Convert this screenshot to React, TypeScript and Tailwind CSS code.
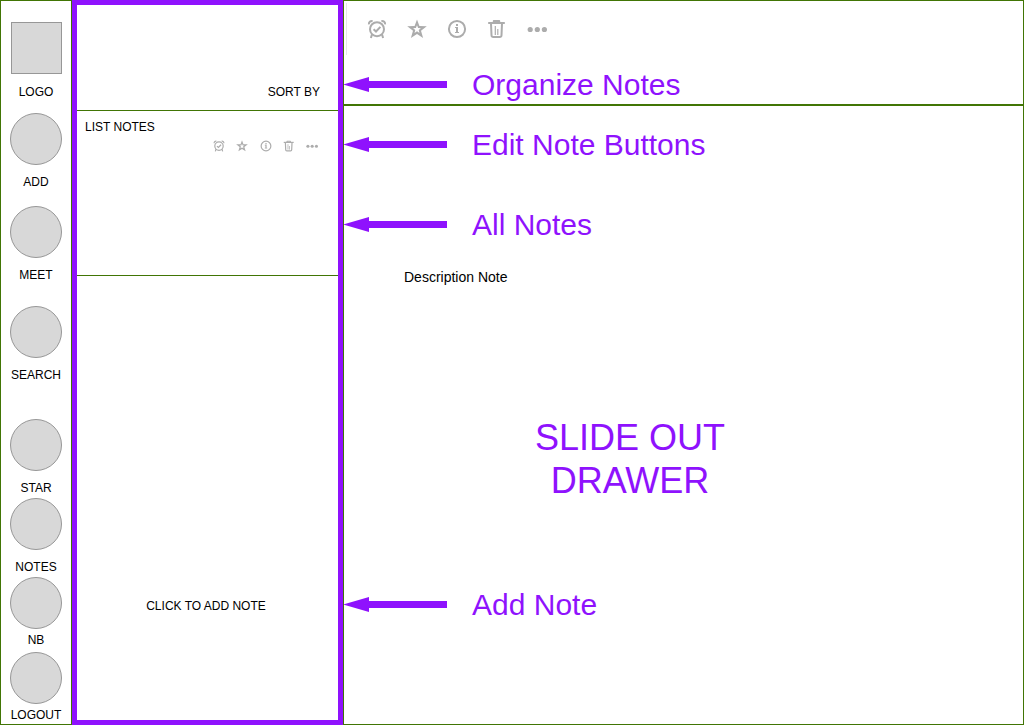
import React from "react";

type IconProps = { className?: string };

function AlarmIcon({ className }: IconProps) {
  return (
    <svg viewBox="0 0 20 20" className={className} fill="none" stroke="currentColor" strokeWidth="2" aria-hidden="true">
      <circle cx="10" cy="10.2" r="7" />
      <path d="M6.6 10.2l2.4 2.3 4.4-4.6" />
      <path d="M1.9 5.4C1.7 3 3.2 1.7 5.6 1.9M18.1 5.4c.2-2.4-1.300-3.7-3.700-3.500" />
      <path d="M5 15.400L3.900 19M15 15.400l1.100 3.600" />
    </svg>
  );
}

function StarIcon({ className }: IconProps) {
  return (
    <svg viewBox="0 0 20 20" className={className} fill="currentColor" fillRule="evenodd" aria-hidden="true">
      <path d="M10 .5l2.4 6.5 7.400.2-5.800 4.500 2.100 7.200L10 14.900l-6.100 4 2.100-7.200L.2 7.200 7.600 7 10 .5zM10 6.300L8.900 9.100l-2.800.2 2.200 1.700-.8 2.900L10 12.300l2.500 1.600-.8-2.900 2.200-1.700-2.800-.2L10 6.300z" />
    </svg>
  );
}

function InfoIcon({ className }: IconProps) {
  return (
    <svg viewBox="0 0 20 20" className={className} aria-hidden="true">
      <circle cx="10" cy="10" r="8.1" fill="none" stroke="currentColor" strokeWidth="2" />
      <path fill="currentColor" d="M9 5h2v2H9zM8 8h3v5h1v1H8v-1h1V9H8z" />
    </svg>
  );
}

function TrashIcon({ className }: IconProps) {
  return (
    <svg viewBox="0 0 20 20" className={className} fill="none" stroke="currentColor" strokeLinejoin="round" aria-hidden="true">
      <path strokeWidth="2" d="M1.200 4h16.600" />
      <path strokeWidth="1.8" d="M6.700 3.500V2h5.600v1.500" />
      <path strokeWidth="2" d="M4 4.500l.5 11.700q.1 1.800 1.800 1.800h6.400q1.700 0 1.800-1.800L15 4.500" />
      <path strokeWidth="1.200" d="M8.300 7v9M10.800 10v6" />
    </svg>
  );
}

function DotsIcon({ className }: IconProps) {
  return (
    <svg viewBox="0 0 20 20" className={className} fill="currentColor" aria-hidden="true">
      <circle cx="3.2" cy="10.5" r="2.6" />
      <circle cx="10.3" cy="10.5" r="2.6" />
      <circle cx="17.4" cy="10.5" r="2.6" />
    </svg>
  );
}

const actions = [
  { label: "Set reminder", Icon: AlarmIcon },
  { label: "Add star", Icon: StarIcon },
  { label: "Note info", Icon: InfoIcon },
  { label: "Delete note", Icon: TrashIcon },
  { label: "More actions", Icon: DotsIcon },
];

function NoteActions({ iconClass }: { iconClass: string }) {
  return (
    <>
      {actions.map(({ label, Icon }) => (
        <button key={label} type="button" aria-label={label} className="block text-[#acacac]">
          <Icon className={iconClass} />
        </button>
      ))}
    </>
  );
}

const navItems = [
  { label: "ADD", spacing: "mt-[13px] gap-[9px]" },
  { label: "MEET", spacing: "mt-4 gap-[9px]" },
  { label: "SEARCH", spacing: "mt-[23px] gap-[9px]" },
  { label: "STAR", spacing: "mt-9 gap-[9px]" },
  { label: "NOTES", spacing: "mt-0.5 gap-[9px]" },
  { label: "NB", spacing: "mt-0.5 gap-[3px]" },
  { label: "LOGOUT", spacing: "mt-1 gap-[3px]" },
];

function Callout({ children, className = "" }: { children: React.ReactNode; className?: string }) {
  return (
    <div className={`flex items-center gap-[25px] ${className}`}>
      <svg viewBox="0 0 103 16" className="h-4 w-[103px] shrink-0" fill="#8f12fd" aria-hidden="true">
        <path d="M-1 7.5L25 0V4H103v7H25v4z" />
      </svg>
      <p className="text-[30px] leading-9 text-[#8f12fd]">{children}</p>
    </div>
  );
}

export default function App() {
  return (
    <div className="flex min-h-screen bg-white font-['Liberation_Sans',Arial,sans-serif] text-xs text-black">
      <nav className="flex w-[72px] shrink-0 flex-col items-center border border-[#417505] pt-[21px]">
        <a href="#home" className="flex flex-col items-center gap-[10px]">
          <span className="h-[52px] w-[51px] border border-[#979797] bg-[#d8d8d8]" />
          <span>LOGO</span>
        </a>
        {navItems.map(({ label, spacing }) => (
          <button key={label} type="button" className={`flex flex-col items-center ${spacing}`}>
            <span className="size-[52px] rounded-full border border-[#979797] bg-[#d8d8d8]" />
            <span>{label}</span>
          </button>
        ))}
      </nav>

      <aside className="flex w-[271px] shrink-0 flex-col border-5 border-[#8f12fd]">
        <div className="flex justify-end border-b border-[#417505] pt-[79px] pr-[18px] pb-[10px]">
          <button type="button">SORT BY</button>
        </div>
        <section className="border-b border-[#417505] pt-2 pb-[123px]">
          <h2 className="pl-2">LIST NOTES</h2>
          <div className="mt-[5px] flex justify-between pr-5 pl-[136px]">
            <NoteActions iconClass="size-3" />
          </div>
        </section>
        <button type="button" className="flex grow items-start justify-center pt-[322px] pr-[3px]">
          CLICK TO ADD NOTE
        </button>
      </aside>

      <main className="min-w-0 grow border border-[#417505]">
        <header className="border-b-2 border-[#417505] pb-px">
          <div className="flex h-14 items-center">
            <div className="ml-0.5 h-[52px] w-px bg-[#e6e6e6]" />
            <div className="ml-5 flex gap-5">
              <NoteActions iconClass="size-5" />
            </div>
          </div>
          <Callout className="mt-[10px]">Organize Notes</Callout>
        </header>
        <Callout className="mt-[21px]">Edit Note Buttons</Callout>
        <Callout className="mt-11">All Notes</Callout>
        <p className="mt-6 pl-[60px] text-sm">Description Note</p>
        <h1 className="mt-[129px] pr-[107px] text-center text-4xl leading-[43px] text-[#8f12fd]">
          SLIDE OUT
          <br />
          DRAWER
        </h1>
        <Callout className="mt-[85px]">Add Note</Callout>
      </main>
    </div>
  );
}
